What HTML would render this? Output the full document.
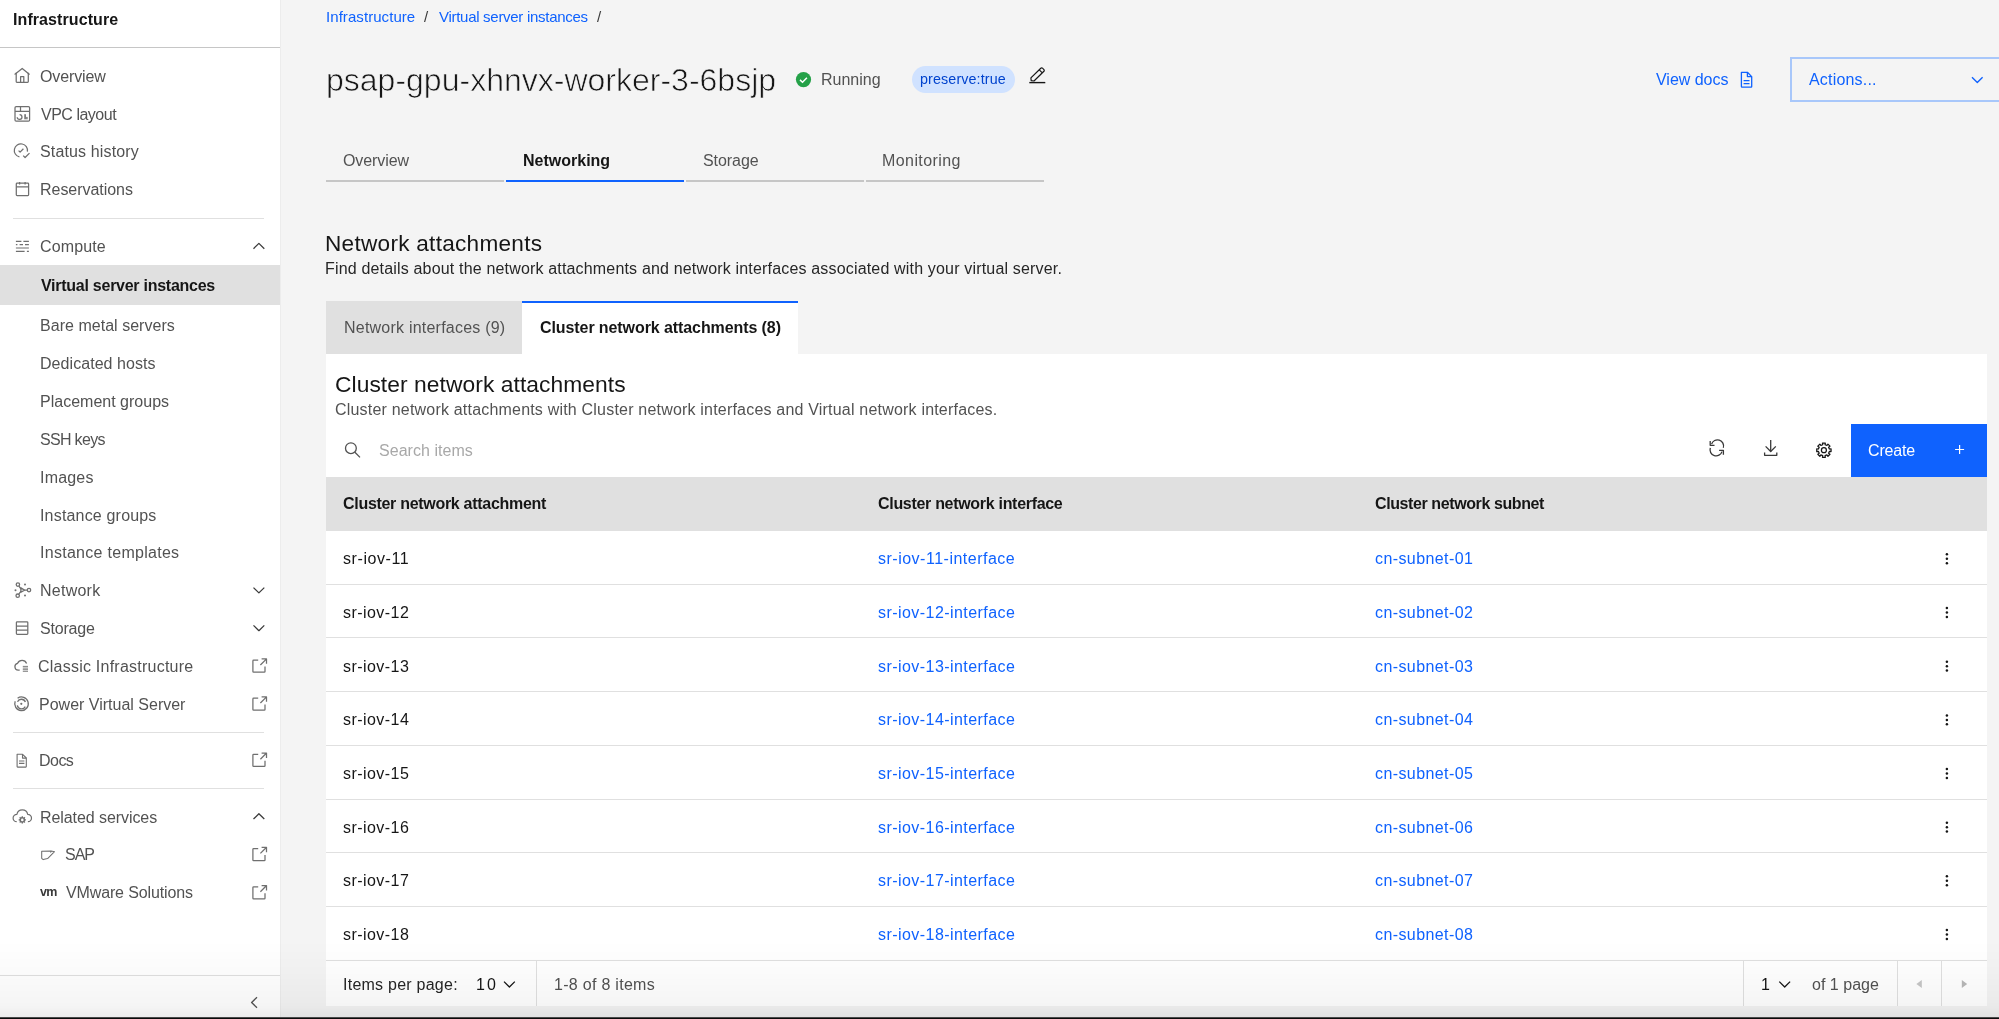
<!DOCTYPE html>
<html><head><meta charset="utf-8"><title>Virtual server instance</title>
<style>
html,body{margin:0;padding:0;width:1999px;height:1019px;overflow:hidden;background:#f4f4f4;}
body{position:relative;font-family:"Liberation Sans", sans-serif;}
.t{position:absolute;line-height:1;white-space:nowrap;font-family:"Liberation Sans", sans-serif;will-change:transform;}
.r{position:absolute;display:block;}
</style></head><body>
<div class="r" style="left:0px;top:0px;width:1999px;height:1019px;background:#f4f4f4;"></div>
<div class="r" style="left:0px;top:0px;width:280px;height:1019px;background:#ffffff;"></div>
<div class="r" style="left:280px;top:0px;width:1px;height:1019px;background:#ececec;"></div>
<div class="t" style="left:12.70px;top:12px;font-size:16px;color:#161616;font-weight:700;letter-spacing:0.085px;">Infrastructure</div>
<div class="r" style="left:0px;top:47px;width:280px;height:1px;background:#c6c6c6;"></div>
<div class="t" style="left:40.00px;top:69px;font-size:16px;color:#525252;letter-spacing:-0.114px;">Overview</div>
<div class="t" style="left:41.20px;top:107px;font-size:16px;color:#525252;letter-spacing:-0.489px;">VPC layout</div>
<div class="t" style="left:40.00px;top:144px;font-size:16px;color:#525252;letter-spacing:0.138px;">Status history</div>
<div class="t" style="left:40.00px;top:182px;font-size:16px;color:#525252;letter-spacing:-0.036px;">Reservations</div>
<div class="t" style="left:40.00px;top:239px;font-size:16px;color:#525252;letter-spacing:0.133px;">Compute</div>
<div class="t" style="left:40.00px;top:318px;font-size:16px;color:#525252;letter-spacing:0.029px;">Bare metal servers</div>
<div class="t" style="left:40.00px;top:356px;font-size:16px;color:#525252;letter-spacing:0.057px;">Dedicated hosts</div>
<div class="t" style="left:40.00px;top:394px;font-size:16px;color:#525252;letter-spacing:0.007px;">Placement groups</div>
<div class="t" style="left:40.00px;top:432px;font-size:16px;color:#525252;letter-spacing:-0.686px;">SSH keys</div>
<div class="t" style="left:40.00px;top:470px;font-size:16px;color:#525252;letter-spacing:0.2px;">Images</div>
<div class="t" style="left:40.00px;top:508px;font-size:16px;color:#525252;letter-spacing:0.179px;">Instance groups</div>
<div class="t" style="left:40.00px;top:545px;font-size:16px;color:#525252;letter-spacing:0.282px;">Instance templates</div>
<div class="t" style="left:40.00px;top:583px;font-size:16px;color:#525252;letter-spacing:0.25px;">Network</div>
<div class="t" style="left:40.00px;top:621px;font-size:16px;color:#525252;letter-spacing:-0.183px;">Storage</div>
<div class="t" style="left:38.10px;top:659px;font-size:16px;color:#525252;letter-spacing:0.233px;">Classic Infrastructure</div>
<div class="t" style="left:38.50px;top:697px;font-size:16px;color:#525252;">Power Virtual Server</div>
<div class="t" style="left:38.50px;top:753px;font-size:16px;color:#525252;letter-spacing:-0.533px;">Docs</div>
<div class="t" style="left:40.20px;top:810px;font-size:16px;color:#525252;letter-spacing:-0.073px;">Related services</div>
<div class="t" style="left:64.70px;top:847px;font-size:16px;color:#525252;letter-spacing:-1.0px;">SAP</div>
<div class="t" style="left:65.70px;top:885px;font-size:16px;color:#525252;letter-spacing:-0.133px;">VMware Solutions</div>
<div class="r" style="left:13px;top:218px;width:251px;height:1px;background:#e0e0e0;"></div>
<div class="r" style="left:0px;top:265px;width:280px;height:40px;background:#e0e0e0;"></div>
<div class="t" style="left:41.00px;top:278px;font-size:16px;color:#161616;font-weight:700;letter-spacing:-0.261px;">Virtual server instances</div>
<div class="r" style="left:13px;top:732px;width:251px;height:1px;background:#e0e0e0;"></div>
<div class="r" style="left:13px;top:788px;width:251px;height:1px;background:#e0e0e0;"></div>
<div class="r" style="left:0px;top:975px;width:280px;height:1px;background:#e0e0e0;"></div>
<svg class="r" style="left:10px;top:62px;" width="26" height="26" viewBox="10 62 26 26"><g fill="none" stroke="#6f6f6f" stroke-width="1.25" stroke-linejoin="round"><polyline points="14.6,74.6 22.2,68.4 29.6,74.6"/><path d="M16.2,72.8 V81.6 Q16.2,82.3 16.9,82.3 H27.6 Q28.3,82.3 28.3,81.6 V72.8"/><path d="M20.6,82.2 V76.6 H23.8 V82.2"/></g></svg>
<svg class="r" style="left:10px;top:100px;" width="26" height="26" viewBox="10 100 26 26"><g fill="none" stroke="#6f6f6f" stroke-width="1.25" stroke-linejoin="round"><rect x="15" y="106.5" width="14.6" height="14.6" rx="1.2"/><path d="M15,111.4 H29.6 M20.5,106.5 V111.4"/><path d="M19.6,114.6 A2.4,2.4 0 1 1 17.2,117.2" /><rect x="24.3" y="114.2" width="1.6" height="5.1" fill="#6f6f6f" stroke="none"/><rect x="26.2" y="116.9" width="1.4" height="2.4" fill="#6f6f6f" stroke="none"/></g></svg>
<svg class="r" style="left:10px;top:138px;" width="26" height="26" viewBox="10 138 26 26"><g fill="none" stroke="#6f6f6f" stroke-width="1.25" stroke-linejoin="round"><path d="M19.4,156.9 A6.6,6.6 0 1 1 27.4,151.6"/><polyline points="18.6,150.6 20.1,152.1 23.4,148.8"/><polyline points="23.2,155.6 25.1,157.5 29.5,153.1"/></g></svg>
<svg class="r" style="left:10px;top:176px;" width="26" height="26" viewBox="10 176 26 26"><g fill="none" stroke="#6f6f6f" stroke-width="1.25" stroke-linejoin="round"><rect x="16.3" y="183.2" width="12.3" height="12.4" rx="0.8"/><path d="M16.3,186.8 H28.6 M19.6,182 V184.6 M25.1,182 V184.6"/></g></svg>
<svg class="r" style="left:10px;top:233px;" width="26" height="26" viewBox="10 233 26 26"><g fill="none" stroke="#6f6f6f" stroke-width="1.2" stroke-linejoin="round"><path d="M15.9,241.3 H21.4 M23.4,241.3 H28.9 M15.9,244.6 H17.4 M19.6,244.6 H23 M25,244.6 H28.9 M15.9,248 H28.9 M15.9,251.4 H24.6 M26.9,251.4 H28.9"/></g></svg>
<svg class="r" style="left:248px;top:238px;" width="22" height="16" viewBox="248 238 22 16"><g fill="none" stroke="#393939" stroke-width="1.25" stroke-linejoin="round"><polyline points="253.5,248.7 258.9,243.4 264.3,248.7"/></g></svg>
<svg class="r" style="left:248px;top:582px;" width="22" height="16" viewBox="248 582 22 16"><g fill="none" stroke="#393939" stroke-width="1.25" stroke-linejoin="round"><polyline points="253.5,587.6 258.9,592.9 264.3,587.6"/></g></svg>
<svg class="r" style="left:248px;top:620px;" width="22" height="16" viewBox="248 620 22 16"><g fill="none" stroke="#393939" stroke-width="1.25" stroke-linejoin="round"><polyline points="253.5,625.4 258.9,630.7 264.3,625.4"/></g></svg>
<svg class="r" style="left:248px;top:808px;" width="22" height="16" viewBox="248 808 22 16"><g fill="none" stroke="#393939" stroke-width="1.25" stroke-linejoin="round"><polyline points="253.5,819 258.9,813.7 264.3,819"/></g></svg>
<svg class="r" style="left:245px;top:992px;" width="18" height="20" viewBox="245 992 18 20"><g fill="none" stroke="#525252" stroke-width="1.3" stroke-linejoin="round"><polyline points="257,997.3 251.6,1002.5 257,1007.7"/></g></svg>
<svg class="r" style="left:10px;top:577px;" width="26" height="26" viewBox="10 577 26 26"><g fill="none" stroke="#6f6f6f" stroke-width="1.3" stroke-linejoin="round"><circle cx="17.9" cy="584.6" r="1.7"/><circle cx="17.7" cy="595.7" r="1.7"/><circle cx="29" cy="590.1" r="1.7"/><path d="M18.9,586.1 L21.1,589 M18.8,594.2 L21.1,591.2 M24.4,590.1 L27.3,590.1"/><polygon points="20.9,587.9 24.5,590.1 20.9,592.3"/><circle cx="15.5" cy="590.2" r="1" fill="#6f6f6f" stroke="none"/><circle cx="25" cy="584.5" r="1" fill="#6f6f6f" stroke="none"/><circle cx="25" cy="595.6" r="1" fill="#6f6f6f" stroke="none"/></g></svg>
<svg class="r" style="left:10px;top:615px;" width="26" height="26" viewBox="10 615 26 26"><g fill="none" stroke="#6f6f6f" stroke-width="1.25" stroke-linejoin="round"><rect x="16.4" y="621.8" width="11.4" height="12.6" rx="0.8"/><path d="M16.4,626 H27.8 M16.4,630.2 H27.8"/></g></svg>
<svg class="r" style="left:10px;top:653px;" width="26" height="26" viewBox="10 653 26 26"><g fill="none" stroke="#6f6f6f" stroke-width="1.25" stroke-linejoin="round"><path d="M19.7,670.2 H18.2 A3.5,3.5 0 0 1 17.6,663.3 A4.9,4.9 0 0 1 26.6,663.4"/><path d="M22.8,666.4 H28 M22.8,668.1 H28 M22.8,669.7 H28 M22.8,671.3 H28" stroke-width="0.9"/></g></svg>
<svg class="r" style="left:10px;top:691px;" width="26" height="26" viewBox="10 691 26 26"><g fill="none" stroke="#6f6f6f" stroke-width="1.3" stroke-linejoin="round"><path d="M17.6,698.2 A6.8,6.8 0 1 1 15.2,701.2"/><path d="M25.3,706.6 A4.3,4.3 0 0 1 17.3,705.4 M17.5,701.7 A4.3,4.3 0 0 1 25.4,702"/><circle cx="21.3" cy="703.8" r="1.1" fill="#6f6f6f" stroke="none"/></g></svg>
<svg class="r" style="left:10px;top:748px;" width="26" height="26" viewBox="10 748 26 26"><g fill="none" stroke="#6f6f6f" stroke-width="1.1" stroke-linejoin="round"><path d="M17.1,754.3 H22.6 L26.3,758 V766.6 Q26.3,767.1 25.8,767.1 H17.6 Q17.1,767.1 17.1,766.6 Z"/><path d="M22.5,754.3 V758.1 H26.3 M19,761 H24.4 M19,763.4 H24.4"/></g></svg>
<svg class="r" style="left:10px;top:803px;" width="26" height="26" viewBox="10 803 26 26"><g fill="none" stroke="#6f6f6f" stroke-width="1.2" stroke-linejoin="round"><path d="M16.7,821.7 A3.7,3.7 0 0 1 16.9,814.3 A5.5,5.5 0 0 1 27.7,814.3 A3.7,3.7 0 0 1 27.9,821.7"/><path d="M25.13,819.28 L25.93,819.18 L25.93,820.62 L25.13,820.52 L24.74,821.46 L25.38,821.96 L24.36,822.98 L23.86,822.34 L22.92,822.73 L23.02,823.53 L21.58,823.53 L21.68,822.73 L20.74,822.34 L20.24,822.98 L19.22,821.96 L19.86,821.46 L19.47,820.52 L18.67,820.62 L18.67,819.18 L19.47,819.28 L19.86,818.34 L19.22,817.84 L20.24,816.82 L20.74,817.46 L21.68,817.07 L21.58,816.27 L23.02,816.27 L22.92,817.07 L23.86,817.46 L24.36,816.82 L25.38,817.84 L24.74,818.34 Z" fill="#6f6f6f" stroke="none"/><circle cx="22.3" cy="819.9" r="1.3" fill="#fff" stroke="none"/></g></svg>
<svg class="r" style="left:38px;top:845px;" width="20" height="20" viewBox="38 845 20 20"><g fill="none" stroke="#6f6f6f" stroke-width="1.05" stroke-linejoin="round"><path d="M41.7,851.3 L51.2,851 L54.5,851.7 L47.6,858.6 L43.2,859.6 L41.7,858.3 Z"/><path d="M51.2,851 L50.5,852.5"/></g></svg>
<div class="t" style="left:40.20px;top:886px;font-size:12.5px;color:#393939;font-weight:700;letter-spacing:-0.6px;">vm</div>
<svg class="r" style="left:248px;top:654px;" width="24" height="24" viewBox="248 654 24 24"><g fill="none" stroke="#6f6f6f" stroke-width="1.25" stroke-linejoin="round"><path d="M258.2,660.2 H253.6 Q252.9,660.2 252.9,660.9 V671.5 Q252.9,672.2 253.6,672.2 H264.3 Q265,672.2 265,671.5 V666.6"/><path d="M261.6,658.9 H266.5 V663.8 M266.3,659.1 L260.4,665.0"/></g></svg>
<svg class="r" style="left:248px;top:692px;" width="24" height="24" viewBox="248 692 24 24"><g fill="none" stroke="#6f6f6f" stroke-width="1.25" stroke-linejoin="round"><path d="M258.2,698.2 H253.6 Q252.9,698.2 252.9,698.9 V709.5 Q252.9,710.2 253.6,710.2 H264.3 Q265,710.2 265,709.5 V704.6"/><path d="M261.6,696.9 H266.5 V701.8 M266.3,697.1 L260.4,703.0"/></g></svg>
<svg class="r" style="left:248px;top:748px;" width="24" height="24" viewBox="248 748 24 24"><g fill="none" stroke="#6f6f6f" stroke-width="1.25" stroke-linejoin="round"><path d="M258.2,754.4 H253.6 Q252.9,754.4 252.9,755.1 V765.7 Q252.9,766.4 253.6,766.4 H264.3 Q265,766.4 265,765.7 V760.8"/><path d="M261.6,753.1 H266.5 V758.0 M266.3,753.3 L260.4,759.2"/></g></svg>
<svg class="r" style="left:248px;top:842px;" width="24" height="24" viewBox="248 842 24 24"><g fill="none" stroke="#6f6f6f" stroke-width="1.25" stroke-linejoin="round"><path d="M258.2,848.6 H253.6 Q252.9,848.6 252.9,849.3 V859.9 Q252.9,860.6 253.6,860.6 H264.3 Q265,860.6 265,859.9 V855.0"/><path d="M261.6,847.3 H266.5 V852.2 M266.3,847.5 L260.4,853.4"/></g></svg>
<svg class="r" style="left:248px;top:881px;" width="24" height="24" viewBox="248 881 24 24"><g fill="none" stroke="#6f6f6f" stroke-width="1.25" stroke-linejoin="round"><path d="M258.2,886.9 H253.6 Q252.9,886.9 252.9,887.6 V898.2 Q252.9,898.9 253.6,898.9 H264.3 Q265,898.9 265,898.2 V893.3"/><path d="M261.6,885.6 H266.5 V890.5 M266.3,885.8 L260.4,891.7"/></g></svg>
<div class="t" style="left:325.75px;top:9px;font-size:15px;color:#0f62fe;letter-spacing:0.065px;">Infrastructure</div>
<div class="t" style="left:424.30px;top:9px;font-size:15px;color:#393939;letter-spacing:0.7px;">/</div>
<div class="t" style="left:439.00px;top:9px;font-size:15px;color:#0f62fe;letter-spacing:-0.287px;">Virtual server instances</div>
<div class="t" style="left:597.00px;top:9px;font-size:15px;color:#393939;letter-spacing:0.5px;">/</div>
<div class="t" style="left:326.40px;top:64px;font-size:32px;color:#161616;letter-spacing:0.004px;-webkit-text-stroke:0.7px #f4f4f4;">psap-gpu-xhnvx-worker-3-6bsjp</div>
<svg class="r" style="left:794px;top:70px;" width="20" height="20" viewBox="794 70 20 20"><circle cx="803.5" cy="79.6" r="7.6" fill="#24a148"/><polyline points="800,79.9 802.5,82.2 806.9,77.7" fill="none" stroke="#fff" stroke-width="1.5"/></svg>
<div class="t" style="left:821.00px;top:72px;font-size:16px;color:#525252;">Running</div>
<div class="r" style="left:912px;top:66px;width:103px;height:27px;background:#d0e2ff;border-radius:14px;"></div>
<div class="t" style="left:920.00px;top:72px;font-size:14.3px;color:#0043ce;letter-spacing:0.125px;">preserve:true</div>
<svg class="r" style="left:1026px;top:64px;" width="22" height="22" viewBox="1026 64 22 22"><g fill="none" stroke="#161616" stroke-width="1.2" stroke-linejoin="round"><path d="M1031.2,80.6 L1030.9,77.9 L1040.8,68.2 A1.2,1.2 0 0 1 1042.5,68.2 L1043.9,69.6 A1.2,1.2 0 0 1 1043.9,71.3 L1034,81 Z M1039.3,69.8 L1042.3,72.8"/><path d="M1029.3,82.6 H1045.3" stroke-width="1.4"/></g></svg>
<div class="t" style="left:1656.00px;top:72px;font-size:16px;color:#0f62fe;letter-spacing:-0.025px;">View docs</div>
<svg class="r" style="left:1738px;top:69px;" width="18" height="22" viewBox="1738 69 18 22"><g fill="none" stroke="#0f62fe" stroke-width="1.3" stroke-linejoin="round"><path d="M1741.4,72.3 H1747.4 L1751.7,76.6 V86.6 Q1751.7,87.2 1751.1,87.2 H1742 Q1741.4,87.2 1741.4,86.6 Z"/><path d="M1747.4,72.3 V76.6 H1751.7 M1743.6,80.6 H1749.5 M1743.6,83.6 H1749.5"/></g></svg>
<div class="r" style="left:1790px;top:57px;width:230px;height:45px;background:transparent;border:2px solid #a8c7fa;box-sizing:border-box;"></div>
<div class="t" style="left:1808.50px;top:72px;font-size:16px;color:#0f62fe;letter-spacing:0.189px;">Actions...</div>
<svg class="r" style="left:1968px;top:72px;" width="18" height="14" viewBox="1968 72 18 14"><g fill="none" stroke="#0f62fe" stroke-width="1.4" stroke-linejoin="round"><polyline points="1972,77.2 1977.3,82.4 1982.6,77.2"/></g></svg>
<div class="r" style="left:326px;top:180px;width:178px;height:2px;background:#c6c6c6;"></div>
<div class="r" style="left:506px;top:180px;width:178px;height:2px;background:#0f62fe;"></div>
<div class="r" style="left:686px;top:180px;width:178px;height:2px;background:#c6c6c6;"></div>
<div class="r" style="left:866px;top:180px;width:178px;height:2px;background:#c6c6c6;"></div>
<div class="t" style="left:343.30px;top:153px;font-size:16px;color:#525252;letter-spacing:-0.086px;">Overview</div>
<div class="t" style="left:523.40px;top:153px;font-size:16px;color:#161616;font-weight:700;">Networking</div>
<div class="t" style="left:702.60px;top:153px;font-size:16px;color:#525252;letter-spacing:-0.067px;">Storage</div>
<div class="t" style="left:882.20px;top:153px;font-size:16px;color:#525252;letter-spacing:0.422px;">Monitoring</div>
<div class="t" style="left:325.20px;top:233px;font-size:22.6px;color:#161616;letter-spacing:0.267px;">Network attachments</div>
<div class="t" style="left:325.00px;top:261px;font-size:16px;color:#262626;letter-spacing:0.172px;">Find details about the network attachments and network interfaces associated with your virtual server.</div>
<div class="r" style="left:326px;top:301px;width:196px;height:53px;background:#e0e0e0;"></div>
<div class="t" style="left:343.60px;top:320px;font-size:16px;color:#525252;letter-spacing:0.224px;">Network interfaces (9)</div>
<div class="r" style="left:522px;top:301px;width:276px;height:53px;background:#ffffff;"></div>
<div class="r" style="left:522px;top:301px;width:276px;height:2px;background:#0f62fe;"></div>
<div class="t" style="left:540.00px;top:320px;font-size:16px;color:#161616;font-weight:700;letter-spacing:-0.087px;">Cluster network attachments (8)</div>
<div class="r" style="left:326px;top:354px;width:1661px;height:652px;background:#ffffff;"></div>
<div class="t" style="left:334.80px;top:373px;font-size:22.8px;color:#161616;letter-spacing:0.065px;">Cluster network attachments</div>
<div class="t" style="left:334.80px;top:402px;font-size:16px;color:#525252;letter-spacing:0.197px;">Cluster network attachments with Cluster network interfaces and Virtual network interfaces.</div>
<svg class="r" style="left:340px;top:437px;" width="24" height="24" viewBox="340 437 24 24"><g fill="none" stroke="#525252" stroke-width="1.3" stroke-linejoin="round"><circle cx="350.9" cy="448.2" r="5.4"/><path d="M354.9,452.3 L360,457.4"/></g></svg>
<div class="t" style="left:378.80px;top:443px;font-size:16px;color:#a8a8a8;letter-spacing:0.036px;">Search items</div>
<svg class="r" style="left:1704px;top:435px;" width="26" height="26" viewBox="1704 435 26 26"><g fill="none" stroke="#393939" stroke-width="1.3" stroke-linejoin="round"><path d="M1723.3,447.8 A6,6 0 0 0 1711.6,444.1"/><path d="M1710.2,441 V445.3 H1714.5"/><path d="M1710.3,447.9 A6,6 0 0 0 1722,451.6"/><path d="M1723.4,454.7 V450.4 H1719.1"/></g></svg>
<svg class="r" style="left:1758px;top:435px;" width="24" height="26" viewBox="1758 435 24 26"><g fill="none" stroke="#393939" stroke-width="1.3" stroke-linejoin="round"><path d="M1770.7,440 V451.5"/><polyline points="1765.6,446.4 1770.7,451.5 1775.8,446.4"/><path d="M1764.6,452.6 V455.3 H1776.8 V452.6"/></g></svg>
<svg class="r" style="left:1812px;top:438px;" width="24" height="24" viewBox="1812 438 24 24"><g fill="none" stroke="#161616" stroke-width="1.25" stroke-linejoin="round"><path d="M1829.37,449.00 L1831.06,448.78 L1831.06,451.62 L1829.37,451.40 L1828.62,453.22 L1829.97,454.26 L1827.96,456.27 L1826.92,454.92 L1825.10,455.67 L1825.32,457.36 L1822.48,457.36 L1822.70,455.67 L1820.88,454.92 L1819.84,456.27 L1817.83,454.26 L1819.18,453.22 L1818.43,451.40 L1816.74,451.62 L1816.74,448.78 L1818.43,449.00 L1819.18,447.18 L1817.83,446.14 L1819.84,444.13 L1820.88,445.48 L1822.70,444.73 L1822.48,443.04 L1825.32,443.04 L1825.10,444.73 L1826.92,445.48 L1827.96,444.13 L1829.97,446.14 L1828.62,447.18 Z"/><circle cx="1823.9" cy="450.2" r="2.5"/></g></svg>
<div class="r" style="left:1851px;top:424px;width:136px;height:53px;background:#0f62fe;"></div>
<div class="t" style="left:1868.00px;top:443px;font-size:16px;color:#ffffff;letter-spacing:-0.16px;">Create</div>
<svg class="r" style="left:1950px;top:440px;" width="20" height="20" viewBox="1950 440 20 20"><g fill="none" stroke="#ffffff" stroke-width="1.2" stroke-linejoin="round"><path d="M1959.6,445 V454 M1955.1,449.5 H1964.1"/></g></svg>
<div class="r" style="left:326px;top:477px;width:1661px;height:54px;background:#e0e0e0;"></div>
<div class="t" style="left:343.40px;top:496px;font-size:16px;color:#161616;font-weight:700;letter-spacing:-0.296px;">Cluster network attachment</div>
<div class="t" style="left:878.20px;top:496px;font-size:16px;color:#161616;font-weight:700;letter-spacing:-0.304px;">Cluster network interface</div>
<div class="t" style="left:1374.50px;top:496px;font-size:16px;color:#161616;font-weight:700;letter-spacing:-0.4px;">Cluster network subnet</div>
<div class="r" style="left:326px;top:584px;width:1661px;height:1px;background:#e0e0e0;"></div>
<div class="t" style="left:343.20px;top:551px;font-size:16px;color:#161616;letter-spacing:0.575px;">sr-iov-11</div>
<div class="t" style="left:878.00px;top:551px;font-size:16px;color:#0f62fe;letter-spacing:0.5px;">sr-iov-11-interface</div>
<div class="t" style="left:1374.50px;top:551px;font-size:16px;color:#0f62fe;letter-spacing:0.409px;">cn-subnet-01</div>
<svg class="r" style="left:1940px;top:550px;" width="14" height="16" viewBox="1940 550 14 16"><circle cx="1946.9" cy="554.3" r="1.25" fill="#161616"/><circle cx="1946.9" cy="558.8" r="1.25" fill="#161616"/><circle cx="1946.9" cy="563.2" r="1.25" fill="#161616"/></svg>
<div class="r" style="left:326px;top:637px;width:1661px;height:1px;background:#e0e0e0;"></div>
<div class="t" style="left:343.20px;top:605px;font-size:16px;color:#161616;letter-spacing:0.45px;">sr-iov-12</div>
<div class="t" style="left:878.00px;top:605px;font-size:16px;color:#0f62fe;letter-spacing:0.444px;">sr-iov-12-interface</div>
<div class="t" style="left:1374.50px;top:605px;font-size:16px;color:#0f62fe;letter-spacing:0.409px;">cn-subnet-02</div>
<svg class="r" style="left:1940px;top:604px;" width="14" height="16" viewBox="1940 604 14 16"><circle cx="1946.9" cy="608.1" r="1.25" fill="#161616"/><circle cx="1946.9" cy="612.6" r="1.25" fill="#161616"/><circle cx="1946.9" cy="617.0" r="1.25" fill="#161616"/></svg>
<div class="r" style="left:326px;top:691px;width:1661px;height:1px;background:#e0e0e0;"></div>
<div class="t" style="left:343.20px;top:659px;font-size:16px;color:#161616;letter-spacing:0.45px;">sr-iov-13</div>
<div class="t" style="left:878.00px;top:659px;font-size:16px;color:#0f62fe;letter-spacing:0.444px;">sr-iov-13-interface</div>
<div class="t" style="left:1374.50px;top:659px;font-size:16px;color:#0f62fe;letter-spacing:0.409px;">cn-subnet-03</div>
<svg class="r" style="left:1940px;top:658px;" width="14" height="16" viewBox="1940 658 14 16"><circle cx="1946.9" cy="661.7" r="1.25" fill="#161616"/><circle cx="1946.9" cy="666.2" r="1.25" fill="#161616"/><circle cx="1946.9" cy="670.6" r="1.25" fill="#161616"/></svg>
<div class="r" style="left:326px;top:745px;width:1661px;height:1px;background:#e0e0e0;"></div>
<div class="t" style="left:343.20px;top:712px;font-size:16px;color:#161616;letter-spacing:0.45px;">sr-iov-14</div>
<div class="t" style="left:878.00px;top:712px;font-size:16px;color:#0f62fe;letter-spacing:0.444px;">sr-iov-14-interface</div>
<div class="t" style="left:1374.50px;top:712px;font-size:16px;color:#0f62fe;letter-spacing:0.409px;">cn-subnet-04</div>
<svg class="r" style="left:1940px;top:711px;" width="14" height="16" viewBox="1940 711 14 16"><circle cx="1946.9" cy="715.4" r="1.25" fill="#161616"/><circle cx="1946.9" cy="719.9" r="1.25" fill="#161616"/><circle cx="1946.9" cy="724.3" r="1.25" fill="#161616"/></svg>
<div class="r" style="left:326px;top:799px;width:1661px;height:1px;background:#e0e0e0;"></div>
<div class="t" style="left:343.20px;top:766px;font-size:16px;color:#161616;letter-spacing:0.45px;">sr-iov-15</div>
<div class="t" style="left:878.00px;top:766px;font-size:16px;color:#0f62fe;letter-spacing:0.444px;">sr-iov-15-interface</div>
<div class="t" style="left:1374.50px;top:766px;font-size:16px;color:#0f62fe;letter-spacing:0.409px;">cn-subnet-05</div>
<svg class="r" style="left:1940px;top:765px;" width="14" height="16" viewBox="1940 765 14 16"><circle cx="1946.9" cy="769.1" r="1.25" fill="#161616"/><circle cx="1946.9" cy="773.6" r="1.25" fill="#161616"/><circle cx="1946.9" cy="778.0" r="1.25" fill="#161616"/></svg>
<div class="r" style="left:326px;top:852px;width:1661px;height:1px;background:#e0e0e0;"></div>
<div class="t" style="left:343.20px;top:820px;font-size:16px;color:#161616;letter-spacing:0.45px;">sr-iov-16</div>
<div class="t" style="left:878.00px;top:820px;font-size:16px;color:#0f62fe;letter-spacing:0.444px;">sr-iov-16-interface</div>
<div class="t" style="left:1374.50px;top:820px;font-size:16px;color:#0f62fe;letter-spacing:0.409px;">cn-subnet-06</div>
<svg class="r" style="left:1940px;top:819px;" width="14" height="16" viewBox="1940 819 14 16"><circle cx="1946.9" cy="822.7" r="1.25" fill="#161616"/><circle cx="1946.9" cy="827.2" r="1.25" fill="#161616"/><circle cx="1946.9" cy="831.6" r="1.25" fill="#161616"/></svg>
<div class="r" style="left:326px;top:906px;width:1661px;height:1px;background:#e0e0e0;"></div>
<div class="t" style="left:343.20px;top:873px;font-size:16px;color:#161616;letter-spacing:0.45px;">sr-iov-17</div>
<div class="t" style="left:878.00px;top:873px;font-size:16px;color:#0f62fe;letter-spacing:0.444px;">sr-iov-17-interface</div>
<div class="t" style="left:1374.50px;top:873px;font-size:16px;color:#0f62fe;letter-spacing:0.409px;">cn-subnet-07</div>
<svg class="r" style="left:1940px;top:872px;" width="14" height="16" viewBox="1940 872 14 16"><circle cx="1946.9" cy="876.3" r="1.25" fill="#161616"/><circle cx="1946.9" cy="880.8" r="1.25" fill="#161616"/><circle cx="1946.9" cy="885.2" r="1.25" fill="#161616"/></svg>
<div class="r" style="left:326px;top:960px;width:1661px;height:1px;background:#e0e0e0;"></div>
<div class="t" style="left:343.20px;top:927px;font-size:16px;color:#161616;letter-spacing:0.45px;">sr-iov-18</div>
<div class="t" style="left:878.00px;top:927px;font-size:16px;color:#0f62fe;letter-spacing:0.444px;">sr-iov-18-interface</div>
<div class="t" style="left:1374.50px;top:927px;font-size:16px;color:#0f62fe;letter-spacing:0.409px;">cn-subnet-08</div>
<svg class="r" style="left:1940px;top:926px;" width="14" height="16" viewBox="1940 926 14 16"><circle cx="1946.9" cy="930.1" r="1.25" fill="#161616"/><circle cx="1946.9" cy="934.6" r="1.25" fill="#161616"/><circle cx="1946.9" cy="939.0" r="1.25" fill="#161616"/></svg>
<div class="t" style="left:343.00px;top:977px;font-size:16px;color:#262626;letter-spacing:0.243px;">Items per page:</div>
<div class="t" style="left:475.80px;top:977px;font-size:16px;color:#161616;letter-spacing:2.2px;">10</div>
<svg class="r" style="left:500px;top:976px;" width="18" height="16" viewBox="500 976 18 16"><g fill="none" stroke="#161616" stroke-width="1.3" stroke-linejoin="round"><polyline points="504,981.6 509.4,987 514.8,981.6"/></g></svg>
<div class="r" style="left:536px;top:961px;width:1px;height:45px;background:#e0e0e0;"></div>
<div class="t" style="left:553.70px;top:977px;font-size:16px;color:#525252;letter-spacing:0.292px;">1-8 of 8 items</div>
<div class="r" style="left:1743px;top:961px;width:1px;height:45px;background:#e0e0e0;"></div>
<div class="t" style="left:1761.00px;top:977px;font-size:16px;color:#161616;letter-spacing:1.0px;">1</div>
<svg class="r" style="left:1775px;top:976px;" width="18" height="16" viewBox="1775 976 18 16"><g fill="none" stroke="#161616" stroke-width="1.3" stroke-linejoin="round"><polyline points="1779.3,981.6 1784.7,987 1790.1,981.6"/></g></svg>
<div class="t" style="left:1811.80px;top:977px;font-size:16px;color:#525252;letter-spacing:0.025px;">of 1 page</div>
<div class="r" style="left:1897px;top:961px;width:1px;height:45px;background:#e0e0e0;"></div>
<div class="r" style="left:1941px;top:961px;width:1px;height:45px;background:#e0e0e0;"></div>
<svg class="r" style="left:1912px;top:976px;" width="14" height="16" viewBox="1912 976 14 16"><polygon points="1921.8,980 1916.4,984 1921.8,988" fill="#c6c6c6"/></svg>
<svg class="r" style="left:1958px;top:976px;" width="14" height="16" viewBox="1958 976 14 16"><polygon points="1961.8,980 1967.2,984 1961.8,988" fill="#b8b8b8"/></svg>
<div class="r" style="left:0;top:940px;width:1999px;height:77px;background:linear-gradient(to bottom, rgba(0,0,0,0) 0%, rgba(0,0,0,0.015) 40%, rgba(0,0,0,0.04) 85%, rgba(0,0,0,0.07) 100%);"></div>
<div class="r" style="left:0px;top:1017px;width:1999px;height:1px;background:#4a4a4a;"></div>
<div class="r" style="left:0px;top:1018px;width:1999px;height:1px;background:#0a0a0a;"></div>
</body></html>
